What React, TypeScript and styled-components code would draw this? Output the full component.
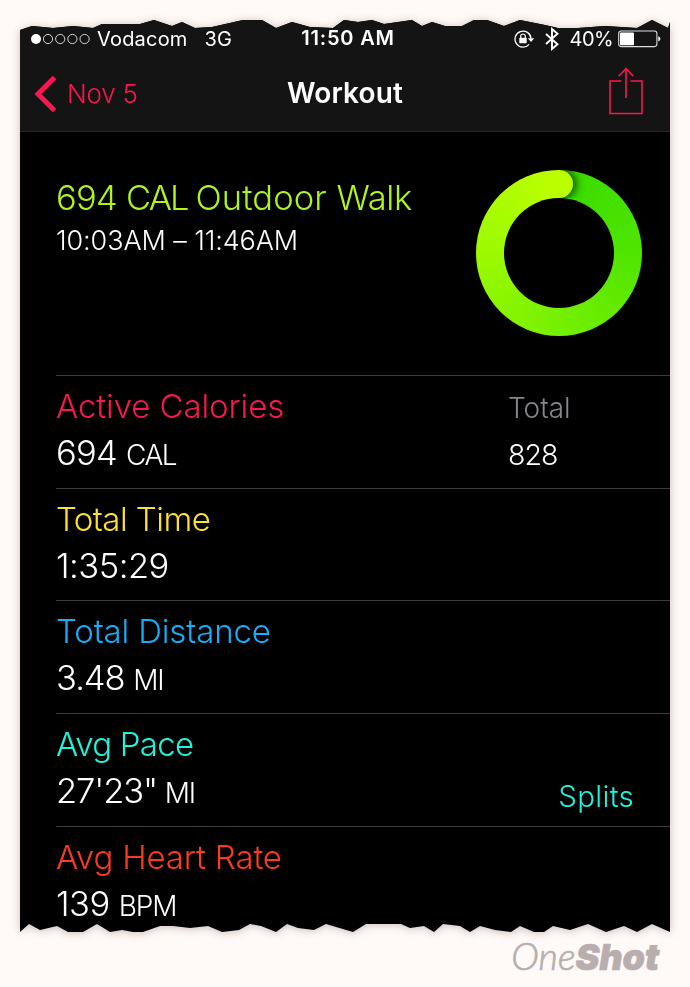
import React from 'react';
import styled, { createGlobalStyle } from 'styled-components';

const GlobalStyle = createGlobalStyle`
  * { box-sizing: border-box; }
  body { margin: 0; background: #fffaf7; }
`;

const pink = '#f9174f';

const tornTop =
  '0 10,12 6,33 8,53 6,73 8,82 4,120 4,134 0,152 6,162 2,175 8,192 7,223 0,242 0,256 8,272 2,290 7,313 8,324 0,338 2,352 0,364 4,392 0,402 6,412 2,425 6,442 6,454 0,467 0,484 6,500 0,525 5,538 8,558 8,585 6,617 8,632 0,648 8,650 2';
const tornBottom =
  '650 912,632 904,617 912,604 906,586 912,568 904,550 910,533 906,524 912,514 912,500 906,491 912,475 910,460 906,450 912,440 906,423 904,414 912,404 906,390 908,381 904,346 904,333 912,306 904,294 910,278 908,267 904,256 912,241 906,230 904,219 910,202 912,188 906,170 908,153 906,140 906,123 912,113 912,102 910,90 912,77 904,63 912,48 912,37 906,20 910,9 904,0 912';
const tornPolygon = `${tornTop},${tornBottom}`
  .split(',')
  .map((p) => p.split(' ').map((n) => `${n}px`).join(' '))
  .join(', ');

const Page = styled.div`
  width: 690px;
  height: 987px;
  padding: 20px 20px 0;
  display: flex;
  flex-direction: column;
  overflow: hidden;
  background: #fffaf7;
  font-family: Inter, 'Liberation Sans', sans-serif;
  font-weight: 340;
  color: #fff;
`;

const PaperShadow = styled.div`
  filter: drop-shadow(0 1px 4px rgba(60, 30, 30, 0.28));
`;

const Paper = styled.main`
  height: 912px;
  display: flex;
  flex-direction: column;
  background: #000;
  clip-path: polygon(${tornPolygon});
`;

const Text = styled.span<{ $size: number; $track?: number; $weight?: number; $color?: string }>`
  font-size: ${(p) => p.$size}px;
  letter-spacing: ${(p) => p.$track ?? 0}px;
  font-weight: ${(p) => p.$weight ?? 340};
  color: ${(p) => p.$color ?? '#fff'};
  white-space: pre;
`;

const TopBar = styled.header`
  height: 112px;
  flex: none;
  background: #141414;
  border-bottom: 1px solid #262626;
`;

const StatusBar = styled.div`
  height: 36px;
  padding: 0 9px 0 11px;
  display: grid;
  grid-template-columns: 1fr auto 1fr;
  align-items: center;
  line-height: 36px;
`;

const StatusSide = styled.div<{ $end?: boolean }>`
  display: flex;
  align-items: center;
  justify-content: ${(p) => (p.$end ? 'flex-end' : 'flex-start')};
  height: 36px;
`;

const Clock = styled.div`
  padding-left: 4px;
`;
const Signal = styled.svg`
  margin-right: 7px;
`;
const Network = styled.div`
  margin-left: 17px;
  display: flex;
`;
const LockIcon = styled.svg`
  margin-right: 10px;
`;
const BluetoothIcon = styled.svg`
  margin-right: 11px;
`;
const Battery = styled.svg`
  margin-left: 5px;
`;

const NavBar = styled.nav`
  height: 75px;
  padding: 0 27px 0 14px;
  display: grid;
  grid-template-columns: 1fr auto 1fr;
  align-items: center;
`;
const Back = styled.div`
  display: flex;
  align-items: center;
  gap: 10px;
`;
const NavTitle = styled.div`
  padding: 0 0 2px 13px;
`;
const Share = styled.svg`
  justify-self: end;
  margin-top: -5px;
`;

const Summary = styled.section`
  height: 243px;
  flex: none;
  padding: 38px 28px 0 36px;
  display: flex;
  justify-content: space-between;
`;
const SummaryText = styled.div`
  padding-top: 5px;
  display: flex;
  flex-direction: column;
`;
const SummaryLine = styled.div<{ $height: number }>`
  height: ${(p) => p.$height}px;
  line-height: ${(p) => p.$height}px;
  white-space: pre;
`;

const Ring = styled.div`
  position: relative;
  width: 166px;
  height: 166px;
  border-radius: 50%;
  overflow: hidden;
  background: conic-gradient(#38db00 0deg, #50e500 90deg, #75f000 180deg, #9cfa00 270deg, #bcff00 360deg);
`;
const RingCapArea = styled.div`
  position: absolute;
  left: 83px;
  top: 0;
  width: 60px;
  height: 28px;
  overflow: hidden;
`;
const RingCap = styled.div`
  width: 28px;
  height: 28px;
  margin-left: -14px;
  border-radius: 50%;
  background: #bcff00;
  box-shadow: 2px 0 8px 1px rgba(0, 40, 0, 0.85);
`;
const RingHole = styled.div`
  position: absolute;
  inset: 28px;
  border-radius: 50%;
  background: #000;
`;

const Metrics = styled.section`
  margin-left: 36px;
`;
const Metric = styled.div`
  height: 112.7px;
  border-top: 1px solid #3c3c3e;
  padding-top: 8px;
  display: flex;
`;
const MetricMain = styled.div`
  flex: 1;
`;
const MetricSide = styled.div`
  width: 162px;
  padding-top: 2px;
`;
const SplitsLink = styled.div`
  align-self: flex-start;
  margin-top: 54px;
  margin-right: 36px;
  line-height: 40px;
`;
const LabelLine = styled.div`
  height: 45px;
  line-height: 45px;
`;
const ValueLine = styled.div`
  height: 47px;
  line-height: 47px;
  white-space: pre;
`;
const Unit = styled.span<{ $gap: number }>`
  margin-left: ${(p) => p.$gap}px;
`;

const Brand = styled.footer`
  display: flex;
  justify-content: flex-end;
  align-items: baseline;
  margin-top: 2px;
  padding-right: 11px;
  font-style: italic;
  line-height: 44px;
`;
const BrandOne = styled.span`
  font-family: Lato, sans-serif;
  font-size: 37.5px;
  font-weight: 300;
  color: #b8aeae;
  -webkit-text-stroke: 0.7px #b8aeae;
`;
const BrandShot = styled.span`
  font-family: Inter, sans-serif;
  font-size: 36px;
  font-weight: 900;
  letter-spacing: -0.2px;
  color: #b8aeae;
  -webkit-text-stroke: 0.6px #b8aeae;
`;

type Row = {
  label: string;
  labelTrack: number;
  color: string;
  value: string;
  valueTrack: number;
  unit?: string;
  unitGap?: number;
  unitTrack?: number;
  total?: string;
  link?: string;
};

const rows: Row[] = [
  { label: 'Active Calories', labelTrack: -0.1, color: pink, value: '694', valueTrack: -0.7, unit: 'CAL', unitGap: 9, unitTrack: -1.6, total: '828' },
  { label: 'Total Time', labelTrack: -0.55, color: '#fde12d', value: '1:35:29', valueTrack: -0.5 },
  { label: 'Total Distance', labelTrack: -0.15, color: '#17aefa', value: '3.48', valueTrack: -1, unit: 'MI', unitGap: 8.5, unitTrack: -1.1 },
  { label: 'Avg Pace', labelTrack: -0.75, color: '#1df5dc', value: '27\'23"', valueTrack: -1.1, unit: 'MI', unitGap: 7.5, unitTrack: -1.1 , link: 'Splits' },
  { label: 'Avg Heart Rate', labelTrack: -0.15, color: '#fc3a20', value: '139', valueTrack: -0.5, unit: 'BPM', unitGap: 9, unitTrack: -1.1 },
];

const lime = '#aef51c';

export default function App() {
  return (
    <>
      <GlobalStyle />
      <Page>
        <PaperShadow>
          <Paper>
            <TopBar>
              <StatusBar>
                <StatusSide>
                  <Signal width="59" height="12" viewBox="0 0 59 12">
                    <circle cx="5" cy="6" r="5" fill="#fff" />
                    {[17, 29.2, 41.4, 53.6].map((x) => (
                      <circle key={x} cx={x} cy="6" r="4.6" fill="none" stroke="#e6e6e6" strokeWidth="0.9" />
                    ))}
                  </Signal>
                  <Text $size={20} $weight={400} $track={0.2}>Vodacom</Text>
                  <Network><Text $size={20} $weight={400} $track={0}>3G</Text></Network>
                </StatusSide>
                <Clock><Text $size={20} $weight={600} $track={0.8}>11:50 AM</Text></Clock>
                <StatusSide $end>
                  <LockIcon width="21" height="18" viewBox="0 0 21 18" fill="none">
                    <path d="M15.1 14.3A8 8 0 1 1 17 8.5" stroke="#fff" strokeWidth="1.3" />
                    <path d="M13.8 8.2h6.4L17 12z" fill="#fff" />
                    <rect x="5.3" y="7.8" width="7.4" height="5.4" rx="0.6" fill="#fff" />
                    <path d="M6.7 8V6.3a2.3 2.3 0 0 1 4.6 0V8" stroke="#fff" strokeWidth="1.2" />
                  </LockIcon>
                  <BluetoothIcon width="14" height="24" viewBox="0 0 14 24" fill="none">
                    <path d="M1 7l11.5 10.3L7 22V2l5.5 4.7L1 17" stroke="#fff" strokeWidth="1.9" />
                  </BluetoothIcon>
                  <Text $size={20} $weight={400} $track={-0.6}>40%</Text>
                  <Battery width="43" height="18" viewBox="0 0 43 18">
                    <rect x="0.7" y="1" width="38.2" height="15.6" rx="2.5" fill="none" stroke="#ddd" strokeWidth="1.1" />
                    <rect x="2" y="2.4" width="14" height="12.8" rx="1" fill="#fff" />
                    <path d="M40.3 6.2c1.4.5 2 1.4 2 2.6s-.6 2.1-2 2.6z" fill="#fff" />
                  </Battery>
                </StatusSide>
              </StatusBar>
              <NavBar>
                <Back>
                  <svg width="23" height="36" viewBox="0 0 23 36">
                    <path d="M20.5 1.5L4 18l16.5 16.5" fill="none" stroke={pink} strokeWidth="5" />
                  </svg>
                  <Text $size={26} $color={pink} $track={-0.25}>Nov 5</Text>
                </Back>
                <NavTitle><Text $size={28} $weight={600} $track={0.1}>Workout</Text></NavTitle>
                <Share width="34" height="48" viewBox="0 0 34 48" fill="none" stroke={pink} strokeWidth="1.6">
                  <path d="M12.5 14H1v32.5h32V14H21.500M17 31V2M9.700 9.200L17 1.600l7.300 7.600" />
                </Share>
              </NavBar>
            </TopBar>
            <Summary>
              <SummaryText>
                <SummaryLine $height={46}>
                  <Text $size={34.5} $color={lime} $track={-0.7}>694 </Text>
                  <Text $size={34.5} $color={lime} $track={-1.9}>CAL </Text>
                  <Text $size={34.5} $color={lime} $track={0.1}>Outdoor </Text>
                  <Text $size={34.5} $color={lime} $track={-0.4}>Walk</Text>
                </SummaryLine>
                <SummaryLine $height={39}><Text $size={27} $track={-0.1}>10:03AM – 11:46AM</Text></SummaryLine>
              </SummaryText>
              <Ring>
                <RingCapArea><RingCap /></RingCapArea>
                <RingHole />
              </Ring>
            </Summary>
            <Metrics>
              {rows.map((r) => (
                <Metric key={r.label}>
                  <MetricMain>
                    <LabelLine><Text $size={33} $color={r.color} $track={r.labelTrack}>{r.label}</Text></LabelLine>
                    <ValueLine>
                      <Text $size={34.5} $track={r.valueTrack}>{r.value}</Text>
                      {r.unit && (
                        <Unit $gap={r.unitGap ?? 8}>
                          <Text $size={28} $track={r.unitTrack}>{r.unit}</Text>
                        </Unit>
                      )}
                    </ValueLine>
                  </MetricMain>
                  {r.total && (
                    <MetricSide>
                      <LabelLine><Text $size={28} $color="#85858b" $track={0}>Total</Text></LabelLine>
                      <ValueLine><Text $size={28.5} $track={-0.9}>{r.total}</Text></ValueLine>
                    </MetricSide>
                  )}
                  {r.link && <SplitsLink><Text $size={29.5} $color="#1df5dc" $track={0.3}>{r.link}</Text></SplitsLink>}
                </Metric>
              ))}
            </Metrics>
          </Paper>
        </PaperShadow>
        <Brand>
          <BrandOne>One</BrandOne>
          <BrandShot>Shot</BrandShot>
        </Brand>
      </Page>
    </>
  );
}
